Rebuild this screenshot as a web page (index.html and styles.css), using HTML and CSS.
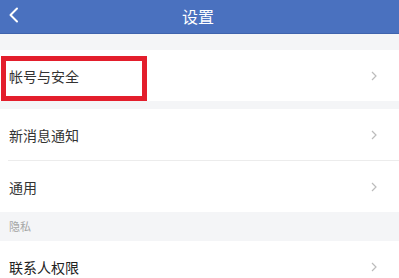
FILE: index.html
```html
<!DOCTYPE html>
<html lang="zh">
<head>
<meta charset="utf-8">
<link rel="stylesheet" href="styles.css">
</head>
<body>
<div class="page">
  <header class="topbar">
    <svg class="back" width="12" height="16" viewBox="0 0 12 16"><path d="M9 1.5 L2.5 8 L9 14.5" fill="none" stroke="#fff" stroke-width="2" stroke-linecap="round" stroke-linejoin="round"/></svg>
    <div class="title">设置</div>
  </header>
  <div class="band"></div>
  <div class="group">
    <div class="row">
      <span class="label">帐号与安全</span>
      <span class="chev"><svg width="6" height="10" viewBox="0 0 6 10"><path d="M1 1 L5 5 L1 9" fill="none" stroke="#bcbcbc" stroke-width="1.2"/></svg></span>
      <div class="highlight"></div>
    </div>
  </div>
  <div class="band small"></div>
  <div class="group">
    <div class="row">
      <span class="label">新消息通知</span>
      <span class="chev"><svg width="6" height="10" viewBox="0 0 6 10"><path d="M1 1 L5 5 L1 9" fill="none" stroke="#bcbcbc" stroke-width="1.2"/></svg></span>
    </div>
    <div class="sep"></div>
    <div class="row">
      <span class="label">通用</span>
      <span class="chev"><svg width="6" height="10" viewBox="0 0 6 10"><path d="M1 1 L5 5 L1 9" fill="none" stroke="#bcbcbc" stroke-width="1.2"/></svg></span>
    </div>
  </div>
  <div class="section">隐私</div>
  <div class="group">
    <div class="row">
      <span class="label strong">联系人权限</span>
      <span class="chev"><svg width="6" height="10" viewBox="0 0 6 10"><path d="M1 1 L5 5 L1 9" fill="none" stroke="#bcbcbc" stroke-width="1.2"/></svg></span>
    </div>
  </div>
</div>
</body>
</html>
```
FILE: styles.css
```css
html, body {
  margin: 0;
  padding: 0;
  background: #ffffff;
}
body {
  font-family: "Noto Sans CJK SC", "Noto Sans", sans-serif;
  width: 399px;
  height: 278px;
  overflow: hidden;
}
.page {
  display: flex;
  flex-direction: column;
}
.topbar {
  position: relative;
  height: 33px;
  background: #4a71bf;
  border-bottom: 1px solid #3f63ad;
  display: flex;
  align-items: center;
  justify-content: center;
}
.back {
  position: absolute;
  left: 8px;
  top: 7px;
}
.title {
  color: #ffffff;
  font-size: 16px;
  line-height: 20px;
  margin-left: -3px;
  margin-top: -2px;
}
.band {
  height: 16px;
  background: #f4f5f7;
}
.band.small {
  height: 8px;
}
.group {
  background: #ffffff;
}
.row {
  position: relative;
  height: 51px;
  display: flex;
  align-items: center;
  justify-content: space-between;
  padding: 0 22px 0 9px;
}
.label {
  font-size: 14px;
  color: #333333;
  letter-spacing: 0;
}
.label.strong {
  color: #222222;
}
.chev {
  display: flex;
  align-items: center;
}
.sep {
  height: 1px;
  background: #ececec;
  margin-left: 8px;
}
.section {
  height: 29px;
  background: #f4f5f7;
  color: #a5a5a5;
  font-size: 11px;
  line-height: 29px;
  padding-left: 9px;
}
.highlight {
  position: absolute;
  left: 1px;
  top: 6px;
  width: 146px;
  height: 45px;
  box-sizing: border-box;
  border: 5px solid #e31e2c;
}
```
